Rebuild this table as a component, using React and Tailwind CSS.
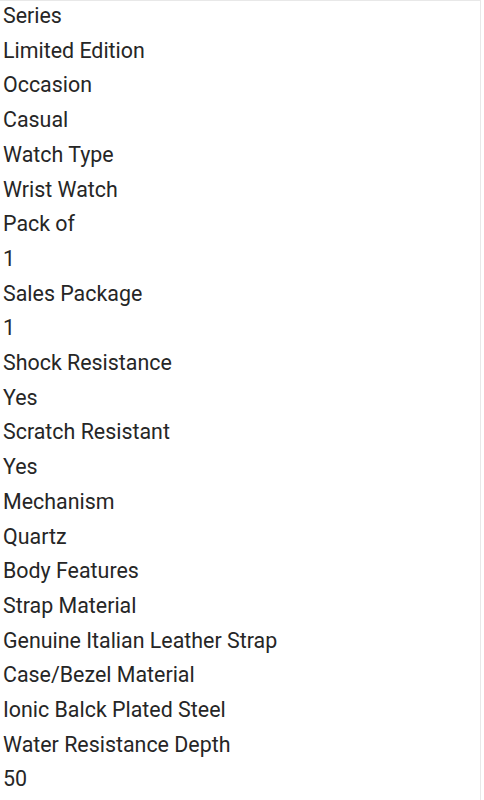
export default function App() {
  const items = [
    "Series",
    "Limited Edition",
    "Occasion",
    "Casual",
    "Watch Type",
    "Wrist Watch",
    "Pack of",
    "1",
    "Sales Package",
    "1",
    "Shock Resistance",
    "Yes",
    "Scratch Resistant",
    "Yes",
    "Mechanism",
    "Quartz",
    "Body Features",
    "Strap Material",
    "Genuine Italian Leather Strap",
    "Case/Bezel Material",
    "Ionic Balck Plated Steel",
    "Water Resistance Depth",
    "50",
  ];
  return (
    <div className="w-[481px] h-[800px] overflow-hidden bg-white border-t border-r border-[#e8e8e8]">
      <div className="pl-[3px] -mt-[2px] font-['Roboto',sans-serif] text-[21.4px] leading-[34.7px] text-[#262626]">
        {items.map((t, i) => (
          <div key={i}>{t}</div>
        ))}
      </div>
    </div>
  );
}
